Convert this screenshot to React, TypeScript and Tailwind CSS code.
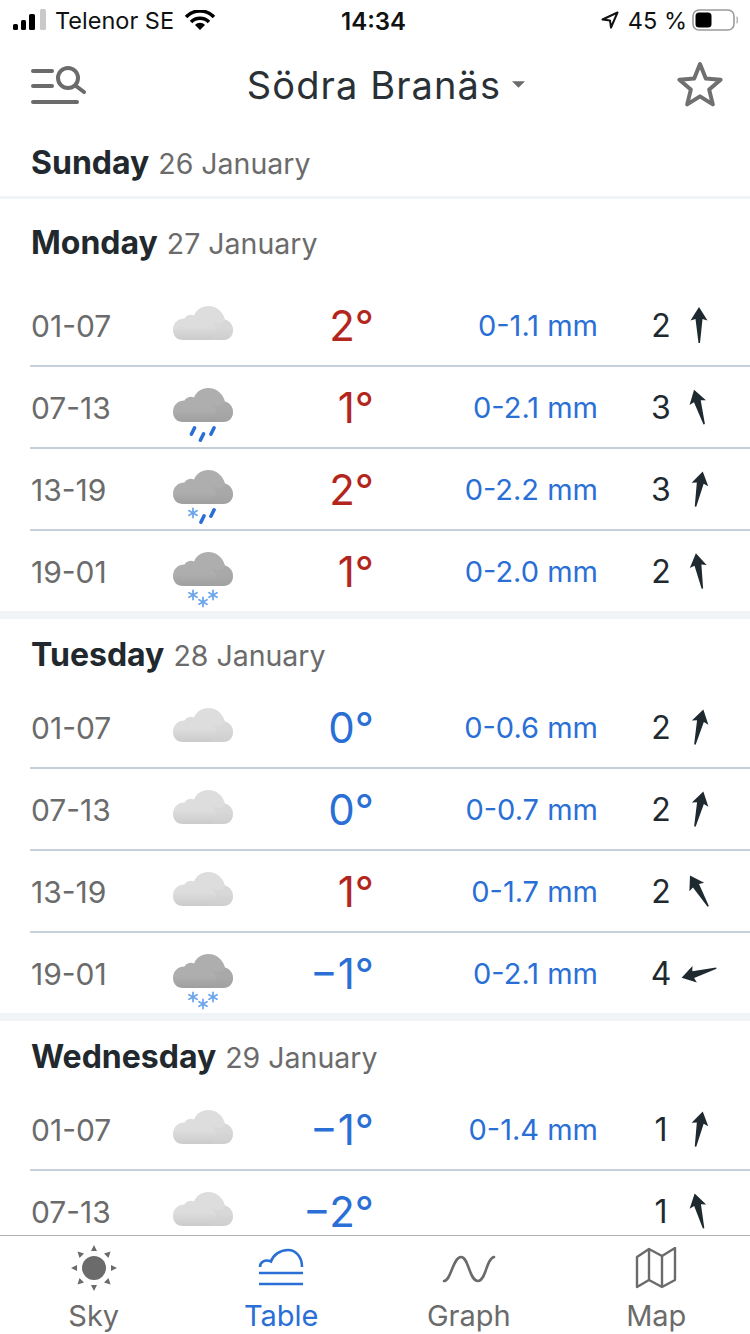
type Row = { time: string; icon: "cloud" | "rain" | "sleet" | "snow"; temp: string; hot: boolean; mm: string; wind: number; deg: number };

const days: { name: string; date: string; head: string; rows: Row[] }[] = [
  {
    name: "Monday",
    date: "27 January",
    head: "h-[86px] pt-[28px]",
    rows: [
      { time: "01-07", icon: "cloud", temp: "2°", hot: true, mm: "0-1.1 mm", wind: 2, deg: 0 },
      { time: "07-13", icon: "rain", temp: "1°", hot: true, mm: "0-2.1 mm", wind: 3, deg: -16 },
      { time: "13-19", icon: "sleet", temp: "2°", hot: true, mm: "0-2.2 mm", wind: 3, deg: 12 },
      { time: "19-01", icon: "snow", temp: "1°", hot: true, mm: "0-2.0 mm", wind: 2, deg: -10 },
    ],
  },
  {
    name: "Tuesday",
    date: "28 January",
    head: "h-[68px] pt-[20px]",
    rows: [
      { time: "01-07", icon: "cloud", temp: "0°", hot: false, mm: "0-0.6 mm", wind: 2, deg: 14 },
      { time: "07-13", icon: "cloud", temp: "0°", hot: false, mm: "0-0.7 mm", wind: 2, deg: 14 },
      { time: "13-19", icon: "cloud", temp: "1°", hot: true, mm: "0-1.7 mm", wind: 2, deg: -30 },
      { time: "19-01", icon: "snow", temp: "−1°", hot: false, mm: "0-2.1 mm", wind: 4, deg: -105 },
    ],
  },
  {
    name: "Wednesday",
    date: "29 January",
    head: "h-[68px] pt-[20px]",
    rows: [
      { time: "01-07", icon: "cloud", temp: "−1°", hot: false, mm: "0-1.4 mm", wind: 1, deg: 12 },
      { time: "07-13", icon: "cloud", temp: "−2°", hot: false, mm: "", wind: 1, deg: -14 },
    ],
  },
];

function Flake({ x, y }: { x: number; y: number }) {
  return (
    <g transform={`translate(${x} ${y})`} stroke="#6ea6ea" strokeWidth="1.8" strokeLinecap="round">
      <line x1="0" y1="-4.5" x2="0" y2="4.5" />
      <line x1="-4" y1="-2.3" x2="4" y2="2.3" />
      <line x1="-4" y1="2.3" x2="4" y2="-2.3" />
    </g>
  );
}

function Drop({ x, y }: { x: number; y: number }) {
  return <line x1={x - 1.6} y1={y + 3.2} x2={x + 1.6} y2={y - 3.2} stroke="#2a6fd6" strokeWidth="3.6" strokeLinecap="round" />;
}

function WeatherIcon({ icon }: { icon: Row["icon"] }) {
  const light = icon === "cloud";
  return (
    <svg viewBox="0 -20 60 80" className="w-[60px] h-[80px] shrink-0">
      <defs>
        <linearGradient id="cloud-light" x1="0" y1="0" x2="0" y2="1">
          <stop offset="0.6" stopColor="#dddddd" />
          <stop offset="1" stopColor="#cbcbcb" />
        </linearGradient>
        <linearGradient id="cloud-dark" x1="0" y1="0" x2="0" y2="1">
          <stop offset="0.65" stopColor="#aeaeae" />
          <stop offset="1" stopColor="#9f9f9f" />
        </linearGradient>
      </defs>
      <path
        d="M10 34C4 34 0 30 0 24C0 17 5 12.500 11.500 12.500C13.500 9 18 8 21 9.500C23.500 3.500 29 0 35 0C44 0 50 6 52 13.500C57 15 60 19 60 24C60 30 56 34 50 34Z"
        fill={light ? "url(#cloud-light)" : "url(#cloud-dark)"}
      />
      <path
        d="M38 16C44 18 49 20 52 13.500C57 15 60 19 60 24C60 30 56 34 50 34H36C44 30 46 22 38 16Z"
        fill={light ? "#d2d2d2" : "#a4a4a4"}
        opacity="0.45"
      />
      {icon === "rain" && (
        <>
          <Drop x={20} y={43} />
          <Drop x={29} y={49} />
          <Drop x={39.5} y={43} />
        </>
      )}
      {icon === "sleet" && (
        <>
          <Flake x={20} y={43} />
          <Drop x={29.5} y={49} />
          <Drop x={39.5} y={43} />
        </>
      )}
      {icon === "snow" && (
        <>
          <Flake x={20} y={43} />
          <Flake x={30} y={50} />
          <Flake x={40} y={43} />
        </>
      )}
    </svg>
  );
}

function Arrow({ deg }: { deg: number }) {
  return (
    <svg viewBox="0 0 36 36" className="-mt-[2px] w-[36px] h-[40px] shrink-0">
      <path
        transform={`rotate(${deg} 18 18)`}
        d="M18 0L26.500 13.500L21.500 12L19 36H17.500L14.500 12L9.500 13.500Z"
        fill="#1f2a30"
      />
    </svg>
  );
}

function Forecast({ row, last }: { row: Row; last: boolean }) {
  return (
    <div className={`ml-[30px] flex items-center pt-[2px] ${last ? "h-[80px]" : "h-[82px] border-b-2 border-[#c5d0da]"}`}>
      <div className="w-[143px] pl-px text-[30px] text-[#6b6b6b]">{row.time}</div>
      <WeatherIcon icon={row.icon} />
      <div className={`w-[141px] text-right text-[42px] leading-none ${row.hot ? "text-[#b3261e]" : "text-[#2a6fd6]"}`}>{row.temp}</div>
      <div className="w-[224px] text-right text-[29px] text-[#2a6fd6]">{row.mm}</div>
      <div className="ml-[43px] w-[40px] text-center text-[32px] text-[#1f2a30]">{row.wind}</div>
      <Arrow deg={row.deg} />
    </div>
  );
}

function DayHead({ name, date, className }: { name: string; date: string; className: string }) {
  return (
    <div className={`pl-[31px] leading-[32px] ${className}`}>
      <span className="text-[32px] font-bold text-[#22292e]">{name}</span>
      <span className="ml-[9px] text-[28.5px] text-[#6b6b6b]">{date}</span>
    </div>
  );
}

function StatusBar() {
  return (
    <div className="relative flex h-[40px] shrink-0 items-center text-[23.5px] leading-none text-[#111]">
      <svg viewBox="0 0 34 22" className="ml-[13px] w-[34px] h-[22px]">
        <rect x="0" y="15" width="5" height="6" rx="1.5" fill="#000" />
        <rect x="8" y="11" width="5" height="10" rx="1.5" fill="#000" />
        <rect x="16" y="5" width="6" height="16" rx="1.5" fill="#000" />
        <rect x="27" y="0" width="6" height="21" rx="1.5" fill="#c9c9c9" />
      </svg>
      <span className="ml-[8px] mt-[2px]">Telenor SE</span>
      <svg viewBox="0 0 30 20" className="ml-[11px] w-[30px] h-[20px]">
        <path d="M1 7C9 -1 21 -1 29 7" fill="none" stroke="#000" strokeWidth="3.6" />
        <path d="M6 12C11 7 19 7 24 12" fill="none" stroke="#000" strokeWidth="3.6" />
        <path d="M10 15C13 12 17 12 20 15L15 20Z" fill="#000" />
      </svg>
      <span className="absolute left-[341px] top-[10px] text-[24px] font-semibold">14:34</span>
      <div className="ml-auto mr-[12px] flex items-center">
        <svg viewBox="0 0 18 18" className="w-[18px] h-[18px] mr-[9px]">
          <path d="M16.5 1.5L1.500 8.500L9 9.500L10 16.500Z" fill="none" stroke="#111" strokeWidth="2" strokeLinejoin="round" />
        </svg>
        <span className="mt-[2px]">45 %</span>
        <svg viewBox="0 0 46 22" className="ml-[5px] w-[46px] h-[22px]">
          <rect x="1" y="1" width="41" height="20" rx="6" fill="none" stroke="#9a9a9a" strokeWidth="1.6" />
          <rect x="3.5" y="3.5" width="16" height="15" rx="3.5" fill="#000" />
          <path d="M44.5 8C45.8 8.6 45.8 13.4 44.5 14" fill="none" stroke="#b5b5b5" strokeWidth="1.6" />
        </svg>
      </div>
    </div>
  );
}

function Header() {
  return (
    <div className="relative flex h-[92px] shrink-0 items-center justify-center">
      <svg viewBox="0 0 56 44" className="absolute left-[31px] top-[25px] w-[56px] h-[44px]" fill="none" stroke="#6b6b6b" strokeWidth="4" strokeLinecap="round">
        <line x1="2" y1="6" x2="21" y2="6" />
        <line x1="2" y1="21" x2="21" y2="21" />
        <line x1="2" y1="37" x2="46" y2="37" />
        <circle cx="37" cy="13" r="10" />
        <line x1="45" y1="21" x2="53" y2="27" />
      </svg>
      <div className="text-[38px] leading-none tracking-[1.1px] text-[#2a3136] -mt-[2px] -ml-[2px]">Södra Branäs</div>
      <svg viewBox="0 0 12 6" className="absolute left-[512px] top-[41px] w-[13px] h-[7px]">
        <path d="M0 0H12L6 6Z" fill="#6b6b6b" />
      </svg>
      <svg viewBox="0 0 46 46" className="absolute left-[677px] top-[21px] w-[46px] h-[46px]">
        <path d="M23 3L28.800 17.600L43.600 18.800L32.200 28.600L35.800 43.400L23 35.400L10.200 43.400L13.800 28.600L2.400 18.800L17.200 17.600Z" fill="none" stroke="#707070" strokeWidth="4" strokeLinejoin="round" />
      </svg>
    </div>
  );
}

function TabBar() {
  return (
    <div className="grid h-[99px] shrink-0 grid-cols-4 border-t border-[#b3b3b3] bg-white text-center text-[29px] leading-none">
      <div className="flex flex-col items-center text-[#6b6b6b]">
        <svg viewBox="0 0 48 48" className="mt-[8px] w-[48px] h-[48px]" fill="#6b6b6b">
          <circle cx="24" cy="24" r="12" />
          <path d="M24 1L27 7H21ZM24 47L21 41H27ZM1 24L7 21V27ZM47 24L41 27V21Z" />
          <path d="M7.500 7.500L14 9.500L9.500 14ZM40.500 40.500L34 38.500L38.500 34ZM7.500 40.500L9.500 34L14 38.500ZM40.500 7.500L38.500 14L34 9.500Z" />
        </svg>
        <span className="mt-[9px]">Sky</span>
      </div>
      <div className="flex flex-col items-center text-[#2a6fd6]">
        <svg viewBox="0 0 46 40" className="mt-[12px] w-[46px] h-[40px]" fill="none" stroke="#2a6fd6" strokeWidth="2.6">
          <path d="M2 19C2 14 7 11 13 13.500C15 7 22 2 30 2C38 2 44 9 44 19" />
          <line x1="1" y1="25" x2="45" y2="25" />
          <line x1="1" y1="36" x2="45" y2="36" />
        </svg>
        <span className="mt-[13px]">Table</span>
      </div>
      <div className="flex flex-col items-center text-[#6b6b6b]">
        <svg viewBox="0 0 54 30" className="mt-[18px] w-[54px] h-[30px]" fill="none" stroke="#6b6b6b" strokeWidth="2.6" strokeLinecap="round">
          <path d="M2 27C9 27 11 3 19 3C27 3 27 27 36 27C44 27 44 5 52 3" />
        </svg>
        <span className="mt-[17px]">Graph</span>
      </div>
      <div className="flex flex-col items-center text-[#6b6b6b]">
        <svg viewBox="0 0 42 42" className="mt-[11px] w-[42px] h-[42px]" fill="none" stroke="#6b6b6b" strokeWidth="2.4" strokeLinejoin="round">
          <path d="M2 10L14 2L27 9L40 1V33L27 40L14 33L2 40Z" />
          <line x1="14" y1="2" x2="14" y2="33" />
          <line x1="27" y1="9" x2="27" y2="40" />
        </svg>
        <span className="mt-[12px]">Map</span>
      </div>
    </div>
  );
}

export default function App() {
  return (
    <div className="flex h-[1334px] w-[750px] flex-col overflow-hidden bg-white font-['Inter',sans-serif]">
      <StatusBar />
      <Header />
      <div className="min-h-0 flex-1 overflow-hidden">
        <DayHead name="Sunday" date="26 January" className="h-[67px] pt-[15px] border-b-[3px] border-[#f0f4f7]" />
        {days.map((day, i) => (
          <div key={day.name} className={i < days.length - 1 ? "border-b-[8px] border-[#f0f4f7]" : ""}>
            <DayHead name={day.name} date={day.date} className={day.head} />
            {day.rows.map((row, j) => (
              <Forecast key={row.time} row={row} last={j === day.rows.length - 1} />
            ))}
          </div>
        ))}
      </div>
      <TabBar />
    </div>
  );
}
